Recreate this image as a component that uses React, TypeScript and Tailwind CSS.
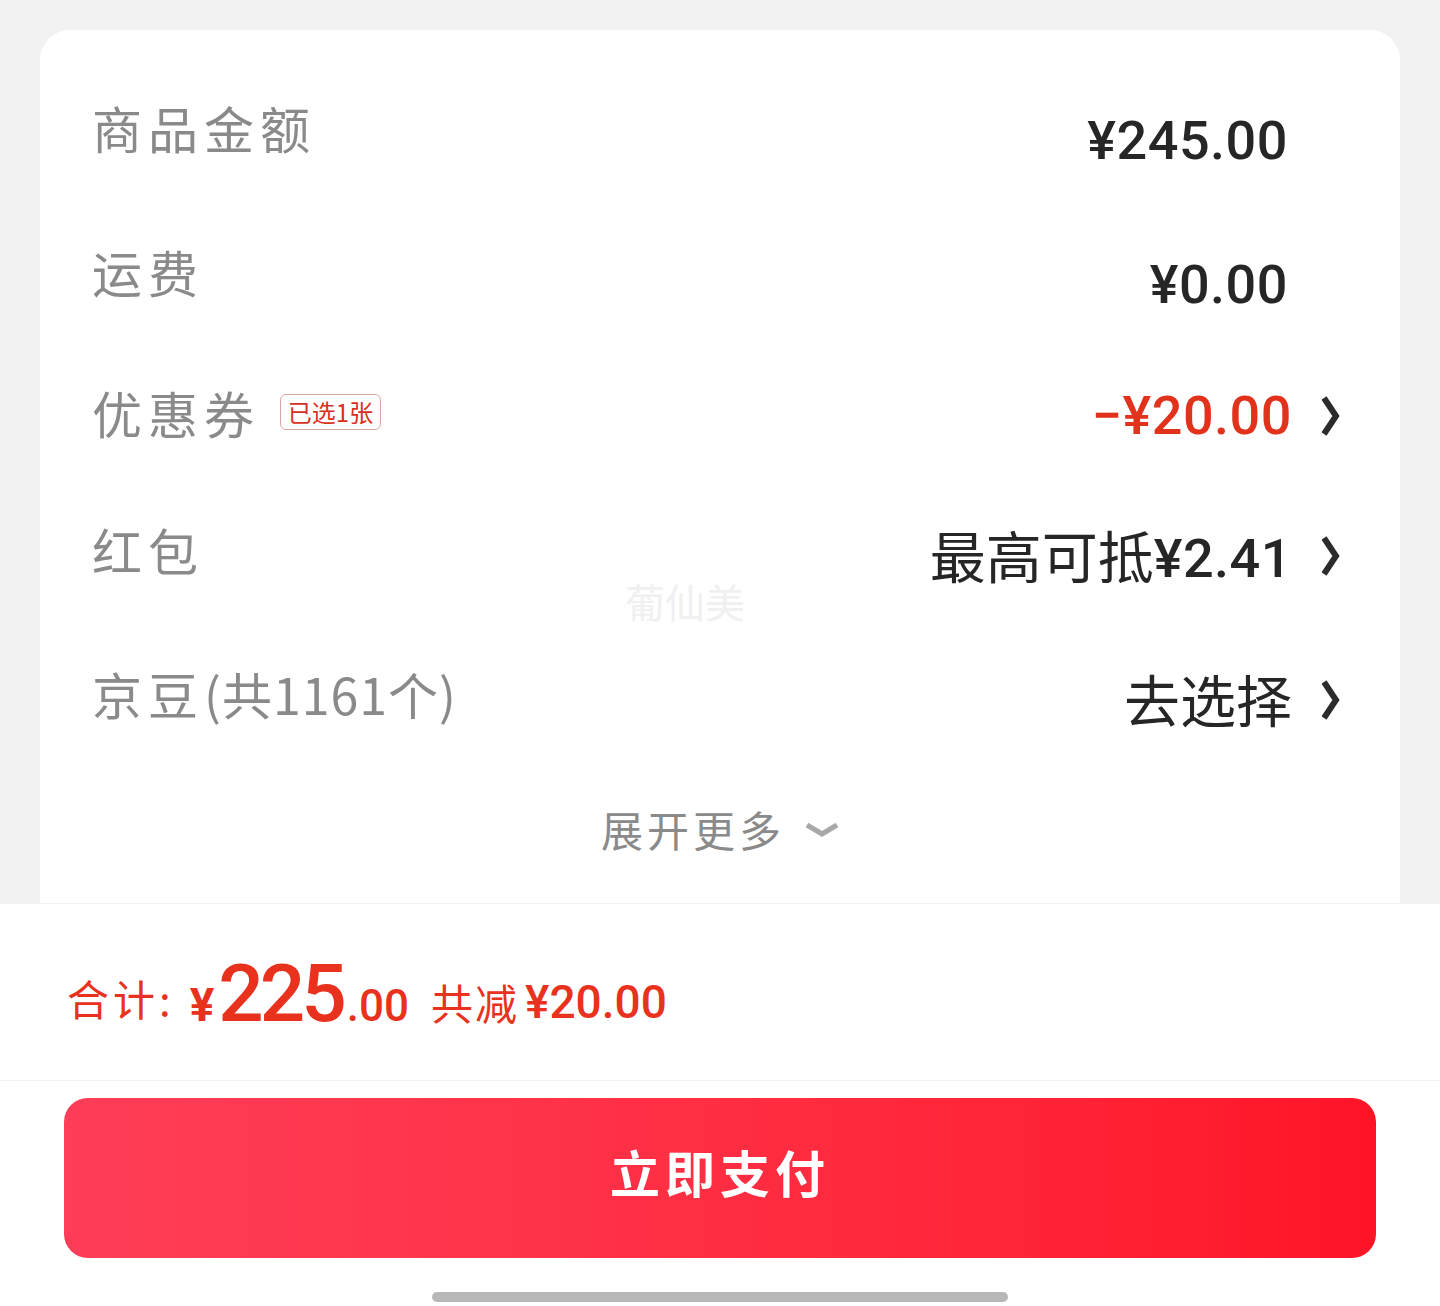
const cjk = 'font-["Noto_Sans_CJK_SC",sans-serif]';
const num = 'font-["Roboto","Noto_Sans_CJK_SC",sans-serif]';

const Chevron = () => (
  <svg width="20" height="40" viewBox="0 0 20 40" fill="none" className="ml-[29px] shrink-0">
    <path d="M3 2 L15 20 L3 38" stroke="#2b2b2b" strokeWidth="6" strokeLinejoin="miter" />
  </svg>
);

const rows = [
  { label: '商品金额', value: '¥245.00', row: 'mt-0', labelPad: 'pb-7', tone: 'text-[#262626]', arrow: false },
  { label: '运费', value: '¥0.00', row: 'mt-[72px]', labelPad: 'pb-7', tone: 'text-[#262626]', arrow: false },
  { label: '优惠券', value: '−¥20.00', row: 'mt-[59px]', labelPad: 'pb-2', tone: 'text-[#e2321c]', arrow: true, badge: '已选1张' },
  { label: '红包', text: '最高可抵', value: '¥2.41', row: 'mt-[68px]', labelPad: 'pb-[14px]', tone: 'text-[#262626]', arrow: true },
  { label: '京豆', sub: '(共1161个)', text: '去选择', row: 'mt-[72px]', labelPad: 'pb-[14px]', tone: 'text-[#262626]', arrow: true },
];

export default function App() {
  return (
    <div className={`relative flex h-[1306px] w-[1440px] flex-col overflow-hidden bg-[#f2f2f2] ${cjk}`}>
      {/* Price details */}
      <div className="mx-10 mt-[30px] h-[873px] shrink-0 rounded-t-[30px] bg-white pt-[75px] pl-[52px]">
        {rows.map(r => (
          <div key={r.label} className={`flex h-[72px] items-center justify-between ${r.row} ${r.arrow ? 'pr-[59px]' : 'pr-[112px]'}`}>
            <div className={`flex items-center ${r.labelPad}`}>
              <span className="text-[50px] leading-none tracking-[6px] text-[#8a8a8a]">{r.label}</span>
              {r.sub && <span className="text-[50px] leading-none tracking-[1px] text-[#8a8a8a]">{r.sub}</span>}
              {r.badge && (
                <span className="ml-5 flex h-9 w-[101px] items-center justify-center rounded-md border border-[#d9a79f] text-[24px] leading-none text-[#d8301f]">
                  {r.badge}
                </span>
              )}
            </div>
            <div className={`flex items-center ${r.tone}`}>
              {r.text && <span className="mb-1 text-[56px] leading-none">{r.text}</span>}
              {r.value && (
                <span className={`${num} text-[54px] leading-none font-medium tracking-[0.5px] ${r.text ? 'mt-1.5' : ''}`}>{r.value}</span>
              )}
              {r.arrow && <Chevron />}
            </div>
          </div>
        ))}

        <div className="mt-[58px] flex h-[72px] items-center justify-center pr-[52px] text-[#8a8a8a]">
          <span className="mb-0.5 text-[42px] leading-none tracking-[4px]">展开更多</span>
          <svg width="34" height="16" viewBox="0 0 34 16" fill="none" className="ml-5">
            <path d="M2 3 L17 12 L32 3" stroke="#a8a8a8" strokeWidth="5" />
          </svg>
        </div>
      </div>

      {/* Watermark */}
      <div className="absolute top-[581px] left-[625px] text-[40px] leading-none text-[#f0f0f0]">葡仙美</div>

      {/* Footer */}
      <div className="flex-1 border-t border-[#f2f2f2] bg-white">
        <div className="flex h-[177px] items-center border-b border-[#f2f2f2] pt-1 pl-[67px] text-[#e8321e]">
          <span className="mt-2 text-[42px] leading-none tracking-[4px]">合计:</span>
          <span className={`${num} ml-[15px] flex items-baseline font-medium`}>
            <span className="text-[46px] leading-none font-bold">¥</span>
            <span className="ml-1 text-[80px] leading-none tracking-[-4px]">225</span>
            <span className="ml-1 text-[44px] leading-none">.00</span>
          </span>
          <span className="mt-4 ml-[22px] text-[42px] leading-none tracking-[2px]">共减</span>
          <span className={`${num} mt-4 ml-1.5 text-[46px] leading-none font-medium`}>¥20.00</span>
        </div>

        <div className="mx-16 mt-[17px] flex h-40 items-center justify-center rounded-3xl bg-gradient-to-r from-[#ff3d58] to-[#ff1426]">
          <span className="pb-[14px] text-[50px] leading-none font-bold tracking-[5px] text-white">立即支付</span>
        </div>

        <div className="mx-auto mt-[34px] h-2.5 w-[576px] rounded-full bg-[#b8b8b8]" />
      </div>
    </div>
  );
}
